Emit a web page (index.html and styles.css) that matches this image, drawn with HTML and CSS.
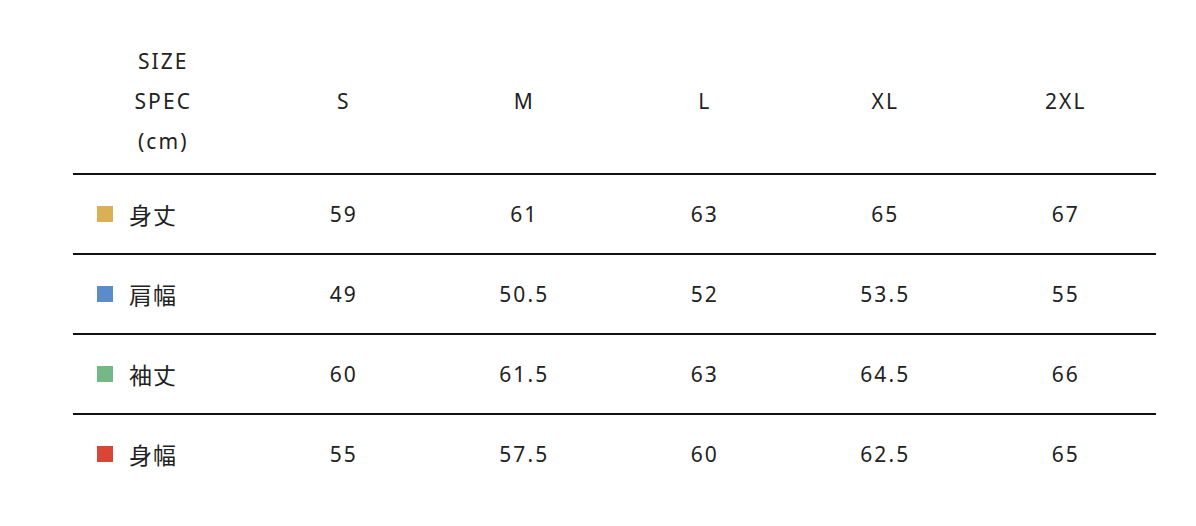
FILE: index.html
```html
<!DOCTYPE html>
<html lang="ja">
<head>
<meta charset="utf-8">
<link rel="stylesheet" href="styles.css">
</head>
<body>
<div class="spec">
  <div class="row head">
    <div class="cell label-h">SIZE<br>SPEC<br>(cm)</div>
    <div class="cell">S</div>
    <div class="cell">M</div>
    <div class="cell">L</div>
    <div class="cell">XL</div>
    <div class="cell">2XL</div>
  </div>
  <div class="row">
    <div class="cell name"><span class="sq gold"></span>身丈</div>
    <div class="cell">59</div><div class="cell">61</div><div class="cell">63</div><div class="cell">65</div><div class="cell">67</div>
  </div>
  <div class="row">
    <div class="cell name"><span class="sq blue"></span>肩幅</div>
    <div class="cell">49</div><div class="cell">50.5</div><div class="cell">52</div><div class="cell">53.5</div><div class="cell">55</div>
  </div>
  <div class="row">
    <div class="cell name"><span class="sq green"></span>袖丈</div>
    <div class="cell">60</div><div class="cell">61.5</div><div class="cell">63</div><div class="cell">64.5</div><div class="cell">66</div>
  </div>
  <div class="row">
    <div class="cell name"><span class="sq red"></span>身幅</div>
    <div class="cell">55</div><div class="cell">57.5</div><div class="cell">60</div><div class="cell">62.5</div><div class="cell">65</div>
  </div>
</div>
</body>
</html>
```
FILE: styles.css
```css
html, body { margin: 0; padding: 0; background: #fff; }
body {
  font-family: "Noto Sans", "Noto Sans CJK JP", sans-serif;
  color: #222;
  font-size: 21px;
  letter-spacing: 0.1em;
}
.spec {
  width: 1083px;
  margin: 29px 0 0 73px;
}
.row {
  display: grid;
  grid-template-columns: repeat(6, 1fr);
  height: 80px;
  border-top: 2px solid #111;
  box-sizing: border-box;
  align-items: center;
}
.row.head {
  border-top: none;
  height: auto;
  padding: 12px 0;
}
.head .label-h { line-height: 40px; }
.cell { text-align: center; }
.cell.name {
  text-align: left;
  display: flex;
  align-items: center;
  padding-left: 24px;
  font-size: 23px;
  letter-spacing: 1px;
  font-weight: 400;
}
.sq {
  width: 16px;
  height: 16px;
  margin-right: 16px;
}
.gold { background: #d9b055; }
.blue { background: #5a8ccb; }
.green { background: #75b887; }
.red { background: #d94634; }
```
